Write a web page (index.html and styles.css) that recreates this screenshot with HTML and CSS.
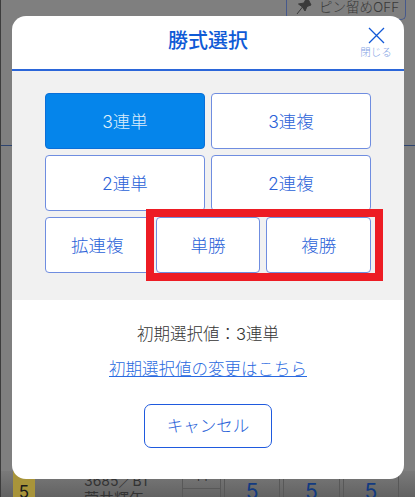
FILE: index.html
```html
<!DOCTYPE html>
<html lang="ja">
<head>
	<meta charset="utf-8">
	<title>勝式選択</title>
	<link rel="stylesheet" href="styles.css">
</head>
<body>
	<div class="page">
		<div class="topbar">
			<div class="pin-btn">
				<svg class="pin-icon" width="17" height="18" viewBox="0 0 17 18">
					<path d="M1 17 L6.5 10 L2.5 7 L8 6 L11 0 L15 8 L11 9.5 L9 14 L6.5 10" fill="#3a3a3a" stroke="#3a3a3a" stroke-width="1"/>
				</svg>
				<span>ピン留めOFF</span>
			</div>
		</div>
		<div class="row-line"></div>
		<div class="race-row">
			<div class="waku">5</div>
			<div class="racer">
				<div class="racer-no">3685／B1</div>
				<div class="racer-name">菅井輝年</div>
			</div>
			<div class="stat">
				<div class="stat-top">1 1</div>
				<div class="stat-bottom"></div>
			</div>
			<div class="odds">5</div>
			<div class="odds">5</div>
			<div class="odds">5</div>
		</div>
	</div>

	<div class="modal">
		<div class="modal-head">
			<h1>勝式選択</h1>
			<div class="close">
				<svg width="17" height="17" viewBox="0 0 17 17">
					<path d="M1 1 L16 16 M16 1 L1 16" stroke="#1259d6" stroke-width="1.3" fill="none"/>
				</svg>
				<span>閉じる</span>
			</div>
		</div>
		<div class="modal-choices">
			<div class="choice-grid">
				<div class="choice selected wide">3連単</div>
				<div class="choice wide">3連複</div>
				<div class="choice wide">2連単</div>
				<div class="choice wide">2連複</div>
				<div class="choice">拡連複</div>
				<div class="choice">単勝</div>
				<div class="choice">複勝</div>
				<div class="highlight"></div>
			</div>
		</div>
		<div class="modal-foot">
			<p class="current">初期選択値：3連単</p>
			<a class="change-link" href="#">初期選択値の変更はこちら</a>
			<div class="cancel">キャンセル</div>
		</div>
	</div>
</body>
</html>
```

FILE: styles.css
```css
* {
	margin: 0;
	padding: 0;
	box-sizing: border-box;
	font-family: Inter, "Noto Sans CJK JP", sans-serif;
}

body {
	width: 415px;
	height: 497px;
	overflow: hidden;
	background: #7f7f7f;
}

.page {
	display: flex;
	flex-direction: column;
	height: 497px;
	border-left: 1px solid #3c3c3c;
}

.topbar {
	display: flex;
	justify-content: flex-end;
	height: 145px;
	padding-right: 9px;
}

.pin-btn {
	display: flex;
	align-items: center;
	gap: 6px;
	width: 120px;
	height: 20px;
	padding-left: 9px;
	padding-bottom: 8px;
	border: 1px solid #46598c;
	border-top: none;
	border-radius: 0 0 5px 5px;
	color: #3a3a3a;
	font-size: 13.5px;
	font-weight: 300;
	white-space: nowrap;
}

.row-line {
	height: 1px;
	background: #2d4470;
}

.race-row {
	display: flex;
	margin-top: auto;
	height: 26px;
	padding-left: 12px;
	padding-right: 16px;
	background: linear-gradient(#7a7a7a, #626262);
	overflow: hidden;
}

.waku {
	width: 22px;
	padding-top: 11px;
	background: #a8943a;
	color: #1a1a1a;
	font-size: 17px;
	line-height: 20px;
	text-align: center;
}

.racer {
	width: 147px;
	padding-left: 49px;
	padding-top: 3px;
	color: #333;
}

.racer-no {
	font-size: 14px;
	line-height: 14px;
	white-space: nowrap;
}

.racer-name {
	font-size: 15px;
	line-height: 22px;
	white-space: nowrap;
}

.stat {
	width: 39px;
	border-left: 1px solid #585858;
	border-right: 1px solid #585858;
}

.stat-top {
	height: 18px;
	border-bottom: 1px solid #585858;
	color: #333;
	font-size: 11px;
	line-height: 12px;
	text-align: center;
}

.odds {
	flex: 1;
	margin-left: 3px;
	border-left: 1px solid #585858;
	border-right: 1px solid #585858;
	color: #123a80;
	font-size: 21px;
	line-height: 30px;
	padding-top: 6px;
	text-align: center;
}

.modal {
	position: absolute;
	top: 16px;
	left: 12px;
	width: 392px;
	height: 463px;
	display: flex;
	flex-direction: column;
	background: #fff;
	border-radius: 14px;
	overflow: hidden;
}

.modal-head {
	position: relative;
	height: 55px;
	border-bottom: 2px solid #2b66d9;
}

.modal-head h1 {
	color: #0f5ad6;
	font-size: 20px;
	font-weight: 500;
	line-height: 50px;
	text-align: center;
}

.close {
	position: absolute;
	top: 11px;
	right: 12px;
	display: flex;
	flex-direction: column;
	align-items: center;
	gap: 2px;
	width: 32px;
	color: #7f9fe4;
	font-size: 10.5px;
	font-weight: 300;
	line-height: 13px;
	white-space: nowrap;
}

.modal-choices {
	height: 229px;
	padding: 22px 33px 0;
	background: #f1f1f1;
}

.choice-grid {
	position: relative;
	display: grid;
	grid-template-columns: repeat(6, 1fr);
	grid-auto-rows: 56px;
	gap: 6px;
}

.choice {
	grid-column: span 2;
	display: flex;
	align-items: center;
	justify-content: center;
	padding-bottom: 2px;
	background: #fff;
	border: 1px solid #6f8de0;
	border-radius: 4px;
	color: #2a62d8;
	font-size: 17.5px;
	font-weight: 300;
}

.choice.wide {
	grid-column: span 3;
}

.choice.selected {
	background: #0585eb;
	border-color: #0a6fd8;
	color: #dcedfb;
}

.highlight {
	position: absolute;
	top: 116px;
	left: 101px;
	width: 237px;
	height: 72px;
	border: 8px solid #ed1c24;
}

.modal-foot {
	flex: 1;
	display: flex;
	flex-direction: column;
	align-items: center;
	padding-top: 22px;
}

.current {
	color: #333;
	font-size: 16.5px;
	font-weight: 300;
	line-height: 24px;
}

.change-link {
	margin-top: 11px;
	color: #2a6ae0;
	font-size: 16.5px;
	font-weight: 300;
	line-height: 24px;
}

.cancel {
	display: flex;
	align-items: center;
	justify-content: center;
	width: 128px;
	height: 44px;
	margin-top: 23px;
	padding-bottom: 2px;
	border: 1px solid #1f5ade;
	border-radius: 7px;
	color: #2a62d8;
	font-size: 16.5px;
	font-weight: 300;
}
```
